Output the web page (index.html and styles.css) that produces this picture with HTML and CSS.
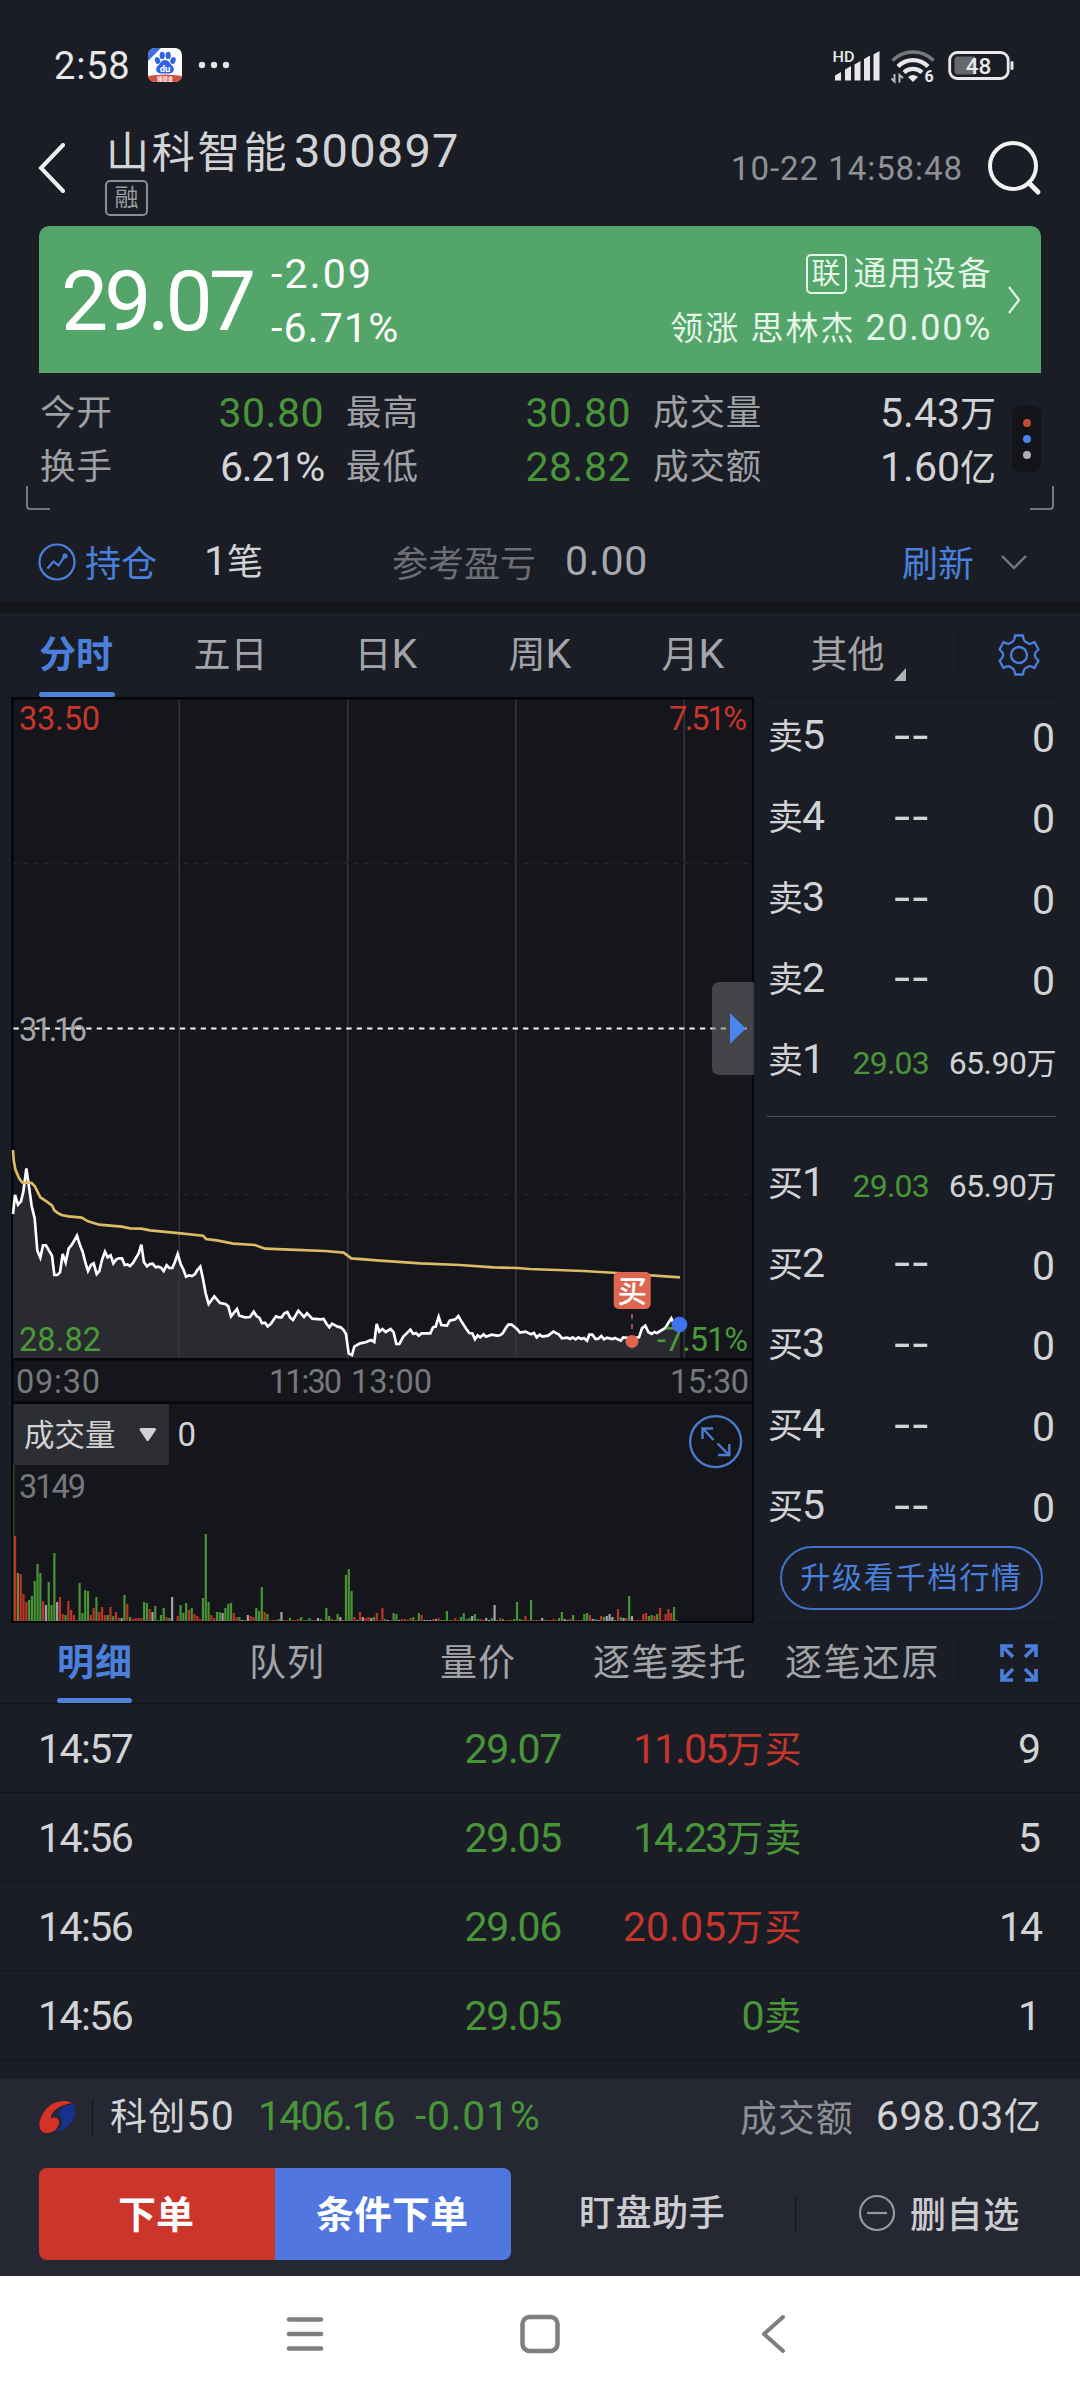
FILE: index.html
```html
<!DOCTYPE html>
<html lang="zh-CN">
<head>
<meta charset="utf-8">
<title>山科智能 300897</title>
<link rel="stylesheet" href="styles.css">
</head>
<body>
<div class="status">
  <span class="clock">2:58</span>
  <svg class="app-icon" width="34" height="34" viewBox="0 0 34 34">
    <clipPath id="appClip"><rect width="34" height="34" rx="7"/></clipPath>
    <g clip-path="url(#appClip)">
      <rect width="34" height="34" fill="#fff"/>
      <path d="M0 0H13L0 13Z" fill="#3d6fe0"/>
      <g fill="#2f63e6"><ellipse cx="9.500" cy="12.500" rx="2.600" ry="3.400" transform="rotate(-20 9.500 12.500)"/><ellipse cx="14.200" cy="7.400" rx="2.600" ry="3.600"/><ellipse cx="20.200" cy="7.400" rx="2.600" ry="3.600"/><ellipse cx="25" cy="12.500" rx="2.600" ry="3.400" transform="rotate(20 25 12.500)"/>
      <path d="M17 12c3 0 4 2 6 4.500 2.500 2.500 3.500 4 2.500 6.500-1.200 3-4.500 2.500-8.500 2.500s-7.300.5-8.500-2.500c-1-2.500 0-4 2.500-6.500 2-2.500 3-4.500 6-4.500z"/></g>
      <text x="17" y="24" text-anchor="middle" font-size="9.500" font-weight="700" fill="#fff">du</text>
      <path d="M0 28Q17 25 34 28V34H0Z" fill="#d2503f"/>
      <text x="17" y="33" text-anchor="middle" font-size="5.500" font-weight="700" fill="#fff">领现金</text>
    </g>
  </svg>
  <svg class="dots" width="32" height="8" viewBox="0 0 32 8" fill="#e6e6e6"><circle cx="4" cy="4" r="3.200"/><circle cx="16" cy="4" r="3.200"/><circle cx="28" cy="4" r="3.200"/></svg>
  <svg class="signals" width="210" height="50" viewBox="0 0 210 50" fill="#e8e8e8">
    <text x="12.500" y="21.500" font-size="14.500" font-weight="500" textLength="22" lengthAdjust="spacingAndGlyphs">HD</text>
    <path d="M15 35.500L21 32V40.500H15ZM25 29.500L31 26V40.500H25ZM34.500 24.500L40.500 21V40.500H34.500ZM44 19L50 15.500V40.500H44ZM53.500 14.500L59.500 11V40.500H53.500Z"/>
    <g fill="none" stroke-width="3.600"><path d="M72.500 20.500A29 29 0 0 1 113.500 20.500" stroke="#77787c"/><path d="M78 26.500A21 21 0 0 1 108 26.500" stroke="#e8e8e8" stroke-width="4.200"/><path d="M84 32.500A13 13 0 0 1 102 32.500" stroke="#e8e8e8" stroke-width="4.200"/></g>
    <path d="M88 37Q93 33 98 37L93 42Z"/>
    <path d="M74.500 34V41.500L71.500 38.500M79.500 42.500V35L83 38" fill="none" stroke="#bbb" stroke-width="2"/>
    <text x="104.500" y="42" font-size="16" font-weight="700">6</text>
    <rect x="129.700" y="12.500" width="58.500" height="26" rx="7.500" fill="none" stroke="#e8e8e8" stroke-width="2.800"/>
    <path d="M138 16.500H155V34.500H138Q134.500 34.500 134.500 31V20Q134.500 16.500 138 16.500Z" fill="#66676b"/>
    <text x="158.500" y="33.500" text-anchor="middle" font-size="22.500" font-weight="500">48</text>
    <rect x="190.500" y="21" width="3" height="9" rx="1.500"/>
  </svg>
</div>

<header class="header">
  <svg class="back" width="28" height="50" viewBox="0 0 28 50"><path d="M25 2L3 25L25 48" fill="none" stroke="#eee" stroke-width="4" stroke-linecap="round"/></svg>
  <div class="title">
    <div class="name"><span class="name-zh">山科智能</span><span class="code">300897</span></div>
    <span class="tag">融</span>
  </div>
  <span class="stamp">10-22 14:58:48</span>
  <svg class="search" width="56" height="56" viewBox="0 0 56 56" fill="none" stroke="#f2f2f2" stroke-width="4"><circle cx="27" cy="26" r="23"/><path d="M43 43L52 52" stroke-width="5" stroke-linecap="round"/></svg>
</header>

<section class="quote">
  <span class="price">29.07</span>
  <div class="change"><span>-2.09</span><span class="pct">-6.71%</span></div>
  <div class="sector">
    <div class="sector-name"><span class="link-tag">联</span><span>通用设备</span></div>
    <div class="leader">领涨 思林杰 <span class="leader-pct">20.00%</span></div>
  </div>
  <svg class="more" width="16" height="30" viewBox="0 0 16 30"><path d="M3 2L13 15L3 28" fill="none" stroke="#e4f6e8" stroke-width="2.200"/></svg>
</section>

<section class="stats">
  <div class="stat-grid">
    <span class="lbl">今开</span><span class="val down">30.80</span><span class="lbl">最高</span><span class="val down">30.80</span><span class="lbl">成交量</span><span class="val">5.43<i class="zh">万</i></span>
    <span class="lbl">换手</span><span class="val narrow">6.21%</span><span class="lbl">最低</span><span class="val down">28.82</span><span class="lbl">成交额</span><span class="val">1.60<i class="zh">亿</i></span>
  </div>
  <div class="stat-side"><i class="dot red"></i><i class="dot blue"></i><i class="dot gray"></i></div>
  <i class="corner left"></i><i class="corner right"></i>
</section>

<section class="position">
  <svg width="38" height="38" viewBox="0 0 38 38" fill="none" stroke="#4a80dc" stroke-width="2.200"><circle cx="19" cy="19" r="17.500"/><path d="M9.500 25.500L15.500 18.500L20.500 22.500L26.500 13.500"/><circle cx="27" cy="13" r="1.500"/></svg>
  <span class="hold">持仓</span>
  <span class="lots">1<i class="zh">笔</i></span>
  <span class="ref-pl">参考盈亏</span>
  <span class="pl">0.00</span>
  <span class="refresh">刷新</span>
  <svg width="28" height="16" viewBox="0 0 28 16"><path d="M2 2L14 14L26 2" fill="none" stroke="#77787c" stroke-width="2.400"/></svg>
</section>

<nav class="tabs">
  <span class="tab on">分时</span><span class="tab">五日</span><span class="tab">日<b>K</b></span><span class="tab">周<b>K</b></span><span class="tab">月<b>K</b></span><span class="tab other">其他</span>
  <i class="tick"></i><i class="split"></i>
  <svg class="gear" width="44" height="44" viewBox="0 0 44 44" fill="none" stroke="#4a80dc" stroke-width="2.300" stroke-linejoin="round"><path d="M18 2.500H26Q26.500 8 28.500 8.700L31.500 10.500Q33 11.500 37.500 9L41.500 16.500Q38 19.500 38 21V23Q38 24.500 41.500 27.500L37.500 35Q33 32.500 31.500 33.500L28.500 35.300Q26.500 36 26 41.500H18Q17.500 36 15.500 35.300L12.500 33.500Q11 32.500 6.500 35L2.500 27.500Q6 24.500 6 23V21Q6 19.500 2.500 16.500L6.500 9Q11 11.500 12.500 10.500L15.500 8.700Q17.500 8 18 2.500Z"/><circle cx="22" cy="22" r="8"/></svg>
</nav>

<main class="market">
  <svg class="chart" width="743" height="926" viewBox="11 697 743 926">
    <rect x="11" y="697" width="743" height="926" fill="#05060a"/>
    <rect x="13.500" y="699.500" width="738.500" height="658.500" fill="#15161b"/>
    <rect x="13.500" y="1360.500" width="738.500" height="41" fill="#15161b"/>
    <rect x="13.500" y="1404" width="738.500" height="217" fill="#15161b"/>
    <path d="M39 402L45 345L54 374L63 364L70 335L79 265L87 320L95 378L104 415L112 512L121 533L129 496H138L147 512L156 527L163 585H172L180 577L188 522L197 547L206 505L214 496L222 483L231 467L240 496L248 515L256 547L264 573L273 555L281 550L290 582L298 573L306 540L315 515L323 532L332 526L340 550L349 538L357 535H366L374 555L382 553L390 558L399 549L416 520L424 494L432 547L441 559L450 552L458 551L467 562L475 560L483 563L491 573L500 556L508 564H517L525 545L533 522L542 552L550 568L558 590L567 586L576 588L585 582L592 570L601 560L609 597L617 640L626 672L643 649L660 669L676 672L685 679L693 709L711 687L718 707L735 712L750 711L761 695L770 709L778 713L786 730L795 728L803 739L812 732L828 709L836 712H845L853 700L862 696L870 712L879 720L895 692L912 711L921 700L937 716L962 718L971 717L980 732L988 742L996 731L1013 740L1022 742L1031 750L1038 762L1046 820L1056 825L1063 800L1080 790L1097 787L1113 780L1123 786L1130 732L1138 755L1147 747L1157 756L1172 747L1181 757L1189 792H1198L1210 770L1223 757L1231 749L1240 762L1248 759L1256 767L1265 760H1291L1299 742L1307 740L1316 710L1324 735L1341 737L1349 722L1366 718L1375 708L1383 722L1399 747L1408 759L1417 760L1425 778L1433 766L1441 772L1451 763L1458 770L1475 764L1491 767L1500 766L1508 760L1517 745L1525 734H1535L1543 740L1551 747L1560 758L1577 755L1593 763L1602 759L1610 772L1619 764L1627 770L1644 767L1660 755L1677 764L1686 775L1702 773L1710 777L1718 772L1727 778L1735 772L1744 777L1752 774L1761 782L1768 764H1777L1787 777L1795 776L1804 768L1812 778L1821 773L1837 777L1845 774L1853 778L1862 782L1870 772L1896 775L1917 772L1926 745L1936 737L1945 756L1955 762L1963 756L1971 759L1996 744L2004 730L2014 715L2020 728L2040 734V834H39Z" transform="translate(0 1080) scale(.33333)" fill="#2a2b30"/>
    <g fill="#34353f"><rect x="178.500" y="699.500" width="1.500" height="658.500"/><rect x="347" y="699.500" width="1.500" height="658.500"/><rect x="515" y="699.500" width="1.500" height="658.500"/><rect x="683.500" y="699.500" width="1.500" height="658.500"/></g>
    <path d="M13.500 863.500H752M13.500 1194.500H752" stroke="#24252c" stroke-width="1.300" stroke-dasharray="5 5"/>
    <path d="M13.500 1028.500H752" stroke="#f4f4f4" stroke-width="2" stroke-dasharray="5.300 5.100"/>
    <g transform="translate(0 1080) scale(.33333)" fill="none" stroke-linejoin="miter">
      <path d="M39 402L45 345L54 374L63 364L70 335L79 265L87 320L95 378L104 415L112 512L121 533L129 496H138L147 512L156 527L163 585H172L180 577L188 522L197 547L206 505L214 496L222 483L231 467L240 496L248 515L256 547L264 573L273 555L281 550L290 582L298 573L306 540L315 515L323 532L332 526L340 550L349 538L357 535H366L374 555L382 553L390 558L399 549L416 520L424 494L432 547L441 559L450 552L458 551L467 562L475 560L483 563L491 573L500 556L508 564H517L525 545L533 522L542 552L550 568L558 590L567 586L576 588L585 582L592 570L601 560L609 597L617 640L626 672L643 649L660 669L676 672L685 679L693 709L711 687L718 707L735 712L750 711L761 695L770 709L778 713L786 730L795 728L803 739L812 732L828 709L836 712H845L853 700L862 696L870 712L879 720L895 692L912 711L921 700L937 716L962 718L971 717L980 732L988 742L996 731L1013 740L1022 742L1031 750L1038 762L1046 820L1056 825L1063 800L1080 790L1097 787L1113 780L1123 786L1130 732L1138 755L1147 747L1157 756L1172 747L1181 757L1189 792H1198L1210 770L1223 757L1231 749L1240 762L1248 759L1256 767L1265 760H1291L1299 742L1307 740L1316 710L1324 735L1341 737L1349 722L1366 718L1375 708L1383 722L1399 747L1408 759L1417 760L1425 778L1433 766L1441 772L1451 763L1458 770L1475 764L1491 767L1500 766L1508 760L1517 745L1525 734H1535L1543 740L1551 747L1560 758L1577 755L1593 763L1602 759L1610 772L1619 764L1627 770L1644 767L1660 755L1677 764L1686 775L1702 773L1710 777L1718 772L1727 778L1735 772L1744 777L1752 774L1761 782L1768 764H1777L1787 777L1795 776L1804 768L1812 778L1821 773L1837 777L1845 774L1853 778L1862 782L1870 772L1896 775L1917 772L1926 745L1936 737L1945 756L1955 762L1963 756L1971 759L1996 744L2004 730L2014 715L2020 728L2040 734" stroke="#fff" stroke-width="8"/>
      <path d="M39 210L41 240L46 268L57 294L66 307L73 309L82 307L95 309L104 318L112 334L121 352L130 358L138 363L148 371L156 376L163 391L172 398L184 405L206 409L245 413L264 424L298 434L365 440L390 445L424 446L450 451L542 460L609 467L618 477L650 481L700 491L765 495L795 506L870 509L975 513L1031 518L1054 535L1140 542L1185 545L1260 550L1380 555L1480 562L1550 564L1590 567L1750 573L1850 579L2040 592" stroke="#dcbb66" stroke-width="8"/>
    </g>
    <g font-size="32.500">
      <text x="19" y="730" fill="#c8362b" textLength="81">33.50</text>
      <text x="669" y="730" fill="#c8362b" textLength="78">7.51%</text>
      <text x="19" y="1041" fill="#a4a5a8" textLength="68">31.16</text>
      <text x="19" y="1351" fill="#4a9a3a" textLength="82">28.82</text>
      <text x="657" y="1351" fill="#4a9a3a" textLength="91">-7.51%</text>
      <g fill="#77787c"><text x="16" y="1393" textLength="84">09:30</text><text x="269" y="1393" textLength="73">11:30</text><text x="351" y="1393" textLength="81">13:00</text><text x="670" y="1393" textLength="79">15:30</text>
      <text x="19" y="1498" textLength="67">3149</text></g>
    </g>
    <path d="M754 982H720Q712 982 712 990V1067Q712 1075 720 1075H754Z" fill="#707174" fill-opacity=".52"/>
    <path d="M730 1013L745.500 1028.500L730 1044Z" fill="#4a85f0"/>
    <path d="M632 1314V1332" stroke="#8d554c" stroke-width="2" stroke-dasharray="5 5"/>
    <rect x="613.700" y="1272" width="37" height="37" rx="5" fill="#df6650"/>
    <text x="632.200" y="1301.500" font-size="29.500" font-weight="500" text-anchor="middle" fill="#fff">买</text>
    <circle cx="632" cy="1341.500" r="6.500" fill="#e0664f"/>
    <circle cx="679.500" cy="1324.500" r="7.800" fill="#3b73f0"/>
    <rect x="13.500" y="1404" width="155.500" height="61" fill="#2d2e33"/>
    <text x="24" y="1445.500" font-size="30.500" fill="#d2d2d2">成交量</text>
    <path d="M141 1429.500H154.500L147.700 1439.500Z" fill="#d2d2d2" stroke="#d2d2d2" stroke-width="3" stroke-linejoin="round"/>
    <text x="177.500" y="1446" font-size="33" fill="#d2d2d2">0</text>
    <rect x="13.300" y="1465" width="1" height="156" fill="#35662b"/>
    <g id="volume"></g>
    <g fill="none" stroke="#4a7bd0" stroke-width="2.400"><circle cx="715.600" cy="1441.600" r="25.500"/><path d="M713.500 1440L703 1428.500M702.500 1439V1428.500H713M717.500 1443.500L729 1455M718 1455H729.300V1444"/></g>
  </svg>

  <section class="book">
    <div class="lvl"><span>卖<b>5</b></span><span class="na">--</span><span class="qty">0</span></div>
    <div class="lvl"><span>卖<b>4</b></span><span class="na">--</span><span class="qty">0</span></div>
    <div class="lvl"><span>卖<b>3</b></span><span class="na">--</span><span class="qty">0</span></div>
    <div class="lvl"><span>卖<b>2</b></span><span class="na">--</span><span class="qty">0</span></div>
    <div class="lvl"><span>卖<b>1</b></span><span class="px">29.03</span><span class="amt">65.90<i>万</i></span></div>
    <hr>
    <div class="lvl"><span>买<b>1</b></span><span class="px">29.03</span><span class="amt">65.90<i>万</i></span></div>
    <div class="lvl"><span>买<b>2</b></span><span class="na">--</span><span class="qty">0</span></div>
    <div class="lvl"><span>买<b>3</b></span><span class="na">--</span><span class="qty">0</span></div>
    <div class="lvl"><span>买<b>4</b></span><span class="na">--</span><span class="qty">0</span></div>
    <div class="lvl"><span>买<b>5</b></span><span class="na">--</span><span class="qty">0</span></div>
    <button class="upgrade">升级看千档行情</button>
  </section>
</main>

<nav class="subtabs">
  <span class="tab on">明细</span><span class="tab">队列</span><span class="tab">量价</span><span class="tab">逐笔委托</span><span class="tab">逐笔还原</span>
  <i class="split"></i>
  <svg class="expand" width="38" height="38" viewBox="0 0 38 38" fill="none" stroke="#4a80dc" stroke-width="3.600"><path d="M2 13V2H13M2 2L13 13M25 2H36V13M36 2L25 13M2 25V36H13M2 36L13 25M25 36H36V25M36 36L25 25"/></svg>
</nav>
<section class="trades">
  <div class="trade"><span>14:57</span><span class="t-px down">29.07</span><span class="t-amt up narrow">11.05<i class="zh">万买</i></span><span class="t-n">9</span></div>
  <div class="trade"><span>14:56</span><span class="t-px down">29.05</span><span class="t-amt down narrow">14.23<i class="zh">万卖</i></span><span class="t-n">5</span></div>
  <div class="trade"><span>14:56</span><span class="t-px down">29.06</span><span class="t-amt up">20.05<i class="zh">万买</i></span><span class="t-n narrow">14</span></div>
  <div class="trade"><span>14:56</span><span class="t-px down">29.05</span><span class="t-amt down">0<i class="zh">卖</i></span><span class="t-n">1</span></div>
</section>

<footer class="bottom">
  <div class="index">
    <svg width="37" height="34" viewBox="0 0 37 34"><path d="M34 3C27-1 13 1 6 12C-1 22 0 33 9 33C15 33 20 29 21 23C22 18 16 16 13 19C12 12 21 5 34 3Z" fill="#d83228"/><path d="M35 4C40 12 36 27 17 33C25 27 26 20 21 15C19 12 25 5 35 4Z" fill="#17318f"/></svg>
    <i class="split"></i>
    <span class="idx-name"><i class="zh">科创</i>50</span><span class="idx-val down">1406.16</span><span class="idx-pct down">-0.01%</span>
    <span class="turn-lbl">成交额</span><span class="turn">698.03<i class="zh">亿</i></span>
  </div>
  <div class="actions">
    <button class="order">下单</button><button class="cond">条件下单</button>
    <span class="helper">盯盘助手</span><i class="split"></i>
    <span class="remove"><svg width="38" height="38" viewBox="0 0 38 38" fill="none" stroke="#97989c" stroke-width="2.200"><circle cx="19" cy="19" r="17"/><path d="M9 19H29"/></svg><span class="remove-text">删自选</span></span>
  </div>
</footer>

<div class="sysnav">
  <svg width="1080" height="124" viewBox="0 0 1080 124" fill="none" stroke="#7e7e7e" stroke-width="4.500" stroke-linecap="round"><path d="M289 43.500H321M289 58H321M289 72.500H321"/><rect x="522.500" y="41" width="35" height="34" rx="7"/><path d="M783 41L764 58L783 75" stroke-linejoin="round" stroke-width="4"/></svg>
</div>
<script src="app.js"></script>
</body>
</html>
```
FILE: styles.css
```css
* { box-sizing: border-box; }
body {
  margin: 0; width: 1080px; height: 2400px; overflow: hidden;
  display: flex; flex-direction: column;
  background: #1b1d26; color: #d2d3d5;
  font-family: Roboto, "Noto Sans CJK SC", sans-serif;
}
svg { display: block; flex: none; }
svg text { font-family: Roboto, "Noto Sans CJK SC", sans-serif; }
i { font-style: normal; }
b { font-weight: 400; }
button { border: 0; padding: 0; font-family: inherit; }
span { white-space: nowrap; }
.zh { font-size: 36px; line-height: 1; }
.down { color: #489638; }
.up { color: #c8352b; }
.split { width: 1px; background: #12131a; }

.status { height: 96px; flex: none; display: flex; align-items: center; padding: 34px 50px 0 54px; }
.clock { width: 94px; font-size: 38px; line-height: 62px; padding-top: 2px; color: #e8e8e8; letter-spacing: .8px; }
.dots { margin-left: 16px; }
.signals { margin-left: auto; }

.header { height: 130px; flex: none; display: flex; padding-left: 38px; }
.back { margin-top: 47px; }
.title { width: 665px; padding: 29px 0 0 39px; }
.name { display: flex; align-items: center; height: 50px; }
.name-zh { font-size: 43px; letter-spacing: 2.800px; width: 189px; padding-left: 1px; margin-top: -2px; }
.code { font-size: 47px; letter-spacing: 1.200px; }
.tag { display: block; width: 43px; height: 36px; margin-top: 5px; border: 2px solid #8c8d92; border-radius: 5px; font-size: 24px; line-height: 33px; text-align: center; color: #9a9b9f; }
.stamp { width: 255px; margin-top: 53px; font-size: 33px; line-height: 40px; letter-spacing: .95px; color: #909195; }
.search { margin-top: 44px; }

.quote { height: 147px; flex: none; margin: 0 39px; padding: 0 19px 0 22px; display: flex; align-items: center; background: #53a569; border-radius: 10px 10px 0 0; color: #fff; }
.price { width: 210px; font-size: 84px; letter-spacing: -4px; line-height: 100px; padding-top: 4px; }
.change { font-size: 41px; line-height: 54px; letter-spacing: 2.200px; padding-top: 2px; display: flex; flex-direction: column; }
.change .pct { letter-spacing: 1.200px; }
.sector { margin-left: auto; padding-top: 3px; color: #e4f6e8; font-size: 33px; letter-spacing: 2px; display: flex; flex-direction: column; align-items: flex-end; line-height: 54px; }
.sector-name { display: flex; align-items: center; gap: 7px; letter-spacing: 1.600px; }
.link-tag { width: 41px; height: 40px; border: 2px solid #e4f6e8; border-radius: 5px; font-size: 29px; line-height: 36px; letter-spacing: 0; text-align: center; }
.leader-pct { font-size: 36px; letter-spacing: 1.600px; }
.more { margin-left: 14px; }

.stats { position: relative; height: 137px; flex: none; display: flex; padding: 14px 39px 0 40px; }
.stat-grid { width: 956px; display: flex; flex-wrap: wrap; align-content: flex-start; }
.lbl { width: 110px; font-size: 35.500px; line-height: 53.500px; color: #a0a1a5; letter-spacing: .9px; }
.val { width: 174px; text-align: right; font-size: 41px; line-height: 53.500px; height: 53.500px; }
.val.down { letter-spacing: .5px; }
.val.narrow { letter-spacing: -1.200px; }
.lbl:nth-child(6n + 3) { margin-left: 22px; }
.val:nth-child(6n + 4) { width: 175px; }
.lbl:nth-child(6n + 5) { margin-left: 22px; width: 130px; }
.val:nth-child(6n) { width: 213px; }
.stat-side { width: 29px; height: 66px; margin: 19px 0 0 16px; border-radius: 7px; background: #131419; display: flex; flex-direction: column; align-items: center; justify-content: center; gap: 8px; }
.dot { width: 8px; height: 8px; border-radius: 50%; }
.dot.red { background: #c34a33; }
.dot.blue { background: #4a83ea; }
.dot.gray { background: #aeaeb0; }
.corner { position: absolute; top: 113px; width: 24px; height: 24px; border: 0 solid #77787d; border-bottom-width: 2px; }
.corner.left { left: 26px; border-left-width: 2px; border-bottom-left-radius: 4px; }
.corner.right { right: 26px; border-right-width: 2px; border-bottom-right-radius: 4px; }

.position { height: 92px; flex: none; display: flex; align-items: center; padding: 12px 50px 0 38px; font-size: 36px; }
.position span { flex: none; margin-top: -2px; }
.hold { width: 127px; margin-left: 9px; color: #4a80dc; }
.lots { width: 188px; font-size: 41px; margin-left: -8px; }
.lots .zh { font-size: 36px; }
.ref-pl { width: 173px; color: #6e6f74; }
.pl { font-size: 41px; color: #a8a9ac; width: 337px; letter-spacing: .8px; }
.refresh { color: #4a80dc; width: 98px; }

.tabs { border-top: 11px solid #15161b; height: 95px; flex: none; display: flex; align-items: center; padding-left: 39px; font-size: 37px; color: #a3a4a8; }
.tab { position: relative; line-height: 86px; height: 84px; }
.tab b { font-size: 41px; line-height: 1; }
.tab.on { color: #4a80dc; font-weight: 700; }
.tab.on::after { content: ""; position: absolute; left: 0; right: 0; bottom: 0; height: 5px; border-radius: 3px; background: #4f82dc; }
.tabs .tab { width: 154.500px; }
.tabs .tab.on::after { right: 79px; }
.tabs .tab:nth-child(2) { width: 161px; }
.tabs .tab:nth-child(3) { width: 154px; }
.tabs .tab:nth-child(4) { width: 153px; }
.tabs .tab:nth-child(5) { width: 149px; }
.tabs .other { width: 83px; }
.tick { border: solid transparent; border-width: 0 0 13px 12px; border-bottom-color: #b0b1b4; margin-top: 39px; }
.tabs .split { height: 40px; margin-left: 52px; }
.gear { margin-left: 38px; }

.market { height: 926px; flex: none; display: flex; padding-left: 11px; }
.book { width: 289px; margin-left: 13px; border-top: 1px solid #14151b; border-bottom: 1px solid #14151b; }
.lvl { height: 80.800px; display: flex; align-items: center; font-size: 35px; line-height: 80px; }
.lvl > span:first-child { width: 75px; padding-left: 1px; }
.lvl b { font-size: 41px; line-height: 1; margin-left: -1px; }
.lvl .na { width: 89px; text-align: right; font-size: 44px; line-height: 76px; letter-spacing: 2px; transform: scaleX(1.3); transform-origin: right; padding-bottom: 5px; }
.px { width: 87px; text-align: right; font-size: 32px; letter-spacing: -.8px; color: #489638; padding-top: 3px; }
.qty, .amt { flex: 1; text-align: right; }
.qty { font-size: 41px; padding-right: 1px; }
.amt { font-size: 32px; letter-spacing: -.5px; padding-top: 3px; }
.amt i { font-size: 30px; line-height: 1; }
.book hr { margin: 14px 0 27.500px; border: 0; height: 1px; background: #55565d; }
.upgrade { display: block; width: 263px; height: 64px; margin: -2px 0 0 13px; border: 2px solid #4370c8; border-radius: 32px; background: none; color: #4a80dc; font-size: 30px; letter-spacing: 1.800px; line-height: 58px; }

.subtabs { height: 81px; flex: none; display: flex; align-items: center; border-bottom: 1px solid #13141a; padding-left: 57px; font-size: 37px; color: #a3a4a8; }
.subtabs .tab { line-height: 82px; height: 80px; letter-spacing: 1px; }
.subtabs .tab:nth-child(1) { width: 75px; margin-right: 117px; }
.subtabs .tab:nth-child(2) { width: 191px; }
.subtabs .tab:nth-child(3) { width: 153px; }
.subtabs .tab:nth-child(4) { width: 192px; letter-spacing: 1.500px; }
.subtabs .tab:nth-child(5) { width: 173px; letter-spacing: 1.800px; }
.subtabs .split { height: 40px; }
.expand { margin-left: 41px; }

.trades { height: 375px; flex: none; }
.trade { height: 89px; border-bottom: 1px solid #13141a; display: flex; padding: 0 39px 0 38px; font-size: 41px; line-height: 90px; }
.trade > span:first-child { width: 160px; letter-spacing: -1.600px; }
.t-px { width: 363px; text-align: right; letter-spacing: -1.300px; }
.t-amt { width: 242px; text-align: right; }
.t-amt .zh { font-size: 37px; letter-spacing: 1.500px; }
.t-amt.narrow { letter-spacing: -2px; }
.t-n { flex: 1; text-align: right; }
.t-n.narrow { letter-spacing: -2px; padding-right: 0; }

.bottom { height: 197px; flex: none; background: #252732; }
.index { height: 76px; display: flex; align-items: center; padding: 0 39px 0 38px; font-size: 41px; }
.index span { margin-top: -2px; }
.index .split, .actions .split { height: 36px; }
.index .split { margin: 0 17px 0 17px; }
.index .zh { font-size: 37px; }
.idx-name { width: 148px; letter-spacing: 1.200px; }
.idx-val { width: 157px; letter-spacing: -1.900px; }
.idx-pct { letter-spacing: .7px; }
.turn-lbl { margin-left: auto; color: #8f9095; font-size: 37px; letter-spacing: 1px; }
.index .turn { margin-left: 22px; letter-spacing: .3px; }
.actions { display: flex; align-items: center; height: 92px; margin: 13px 0 0 39px; font-size: 36px; }
.order, .cond { width: 236px; height: 92px; font-size: 38px; font-weight: 700; color: #fff; padding: 0 2px 5px 0; }
.order { background: #cb352a; border-radius: 8px 0 0 8px; }
.cond { background: #5276e0; border-radius: 0 8px 8px 0; }
.helper { width: 216px; margin-left: 68px; letter-spacing: .6px; line-height: 90px; font-weight: 500; color: #ccccd0; }
.remove { display: flex; align-items: center; gap: 14px; margin-left: 62px; letter-spacing: .6px; font-weight: 500; color: #ccccd0; }
.remove svg { margin-top: -2px; }
.remove-text { margin-top: -4px; }

.sysnav { height: 124px; flex: none; background: #fff; }
```
FILE: app.js
```js
// One entry per minute: colour letter (r rise, g fall, w flat, o mixed) and bar height in px.
const bars = ("r85 o48 r47 r27 r19 g21 g25 g40 g57 g48 r20 w16 g39 g16 g68 w19 r24 r7 g6 r20 r11 r6 r1 g38 g8 g31 g30 r6 r13 g24 r9 r14 r6 g6 r14 g5 r9 r3 w3 g26 " +
"r17 g4 r2 r3 r3 r3 g19 g18 r12 w9 g15 g1 g6 g13 r4 g3 w24 g0 r5 g16 g8 g18 r11 g13 r7 r5 r2 g23 g87 g19 r6 r3 g9 g9 w8 g13 g17 g18 r8 r4 " +
"g4 w1 g1 w6 r5 r4 g13 g10 g34 r9 g7 r1 r1 r1 g2 w9 r1 r1 g3 r1 r1 r2 g4 r1 g1 g3 g1 r1 w3 g2 r1 g13 g5 r2 g1 g7 w4 r1 g46 g52 " +
"g30 r4 w1 r9 w4 r3 r4 w3 g4 r8 r1 r13 g2 w1 r1 g8 g7 w1 r2 r2 g1 r3 g4 r1 g8 r6 w1 w1 w1 r2 w2 r3 g1 g1 g10 g1 r1 r3 r1 g4 " +
"g8 g2 g3 w5 g7 g2 r2 r1 w3 w1 g3 w16 g1 r3 g2 r1 r1 g1 g2 g19 g2 g1 r5 r1 g21 r1 g1 r1 w3 g1 g1 r1 r2 r1 g3 g9 w2 w1 r2 g6 " +
"r1 r1 g1 g7 g8 r6 w2 g2 w1 r5 g4 w5 w7 w4 g1 r12 g4 w3 r3 g25 w5 r1 r1 r1 r7 r8 g5 g6 r5 g7 r13 r1 r7 r12 r8 g14 r1").split(" ");
const colors = { r: "#bd3527", g: "#489336", w: "#a2a3a6", o: "#8c7a36" };
const volume = document.getElementById("volume");
bars.forEach((entry, i) => {
  const h = Number(entry.slice(1));
  const bar = document.createElementNS("http://www.w3.org/2000/svg", "rect");
  bar.setAttribute("x", (14 + i * 2.804).toFixed(2));
  bar.setAttribute("y", 1621 - h);
  bar.setAttribute("width", 2.2);
  bar.setAttribute("height", h);
  bar.setAttribute("fill", colors[entry[0]]);
  volume.appendChild(bar);
});
```
